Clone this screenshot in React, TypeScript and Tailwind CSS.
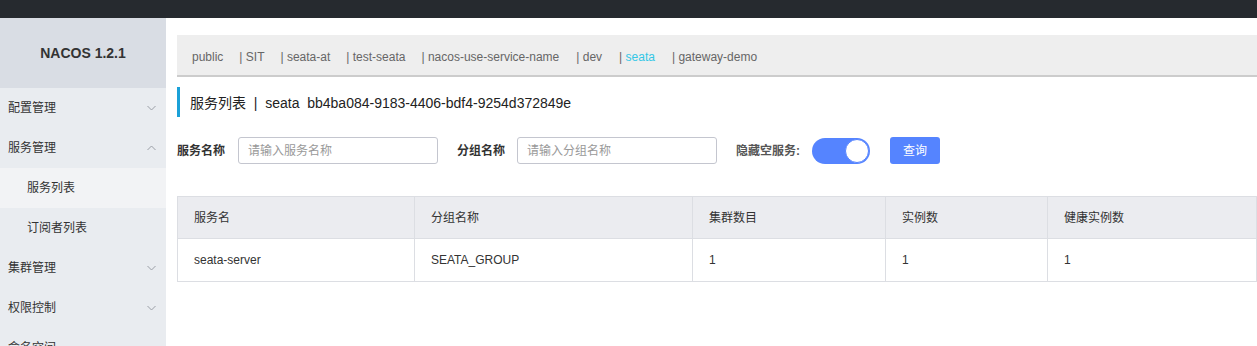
import React from "react";

const FONT = { fontFamily: '"Liberation Sans", "Noto Sans CJK SC", sans-serif' };

const namespaces = ["public", "SIT", "seata-at", "test-seata", "nacos-use-service-name", "dev", "seata", "gateway-demo"];

function Chevron({ up }: { up?: boolean }) {
  return (
    <svg width="9" height="6" viewBox="0 0 9 6" className="text-[#9a9ea6]">
      <polyline
        points={up ? "0.5,5 4.5,1 8.5,5" : "0.5,1 4.5,5 8.5,1"}
        fill="none"
        stroke="currentColor"
        strokeWidth="1"
      />
    </svg>
  );
}

function MenuItem({ label, open, sub, active }: { label: string; open?: boolean; sub?: boolean; active?: boolean }) {
  return (
    <div
      className={`flex h-10 items-center justify-between pr-[10px] text-[12px] text-[#333] ${sub ? "pl-[27px]" : "pl-[8px]"} ${
        active ? "bg-[#f2f3f5]" : ""
      }`}
    >
      <span>{label}</span>
      {sub ? null : <Chevron up={open} />}
    </div>
  );
}

const cols = [
  { title: "服务名", value: "seata-server", w: "w-[237px]" },
  { title: "分组名称", value: "SEATA_GROUP", w: "w-[278px]" },
  { title: "集群数目", value: "1", w: "w-[193px]" },
  { title: "实例数", value: "1", w: "w-[162px]" },
  { title: "健康实例数", value: "1", w: "flex-1" },
];

export default function App() {
  return (
    <div className="flex h-[346px] flex-col overflow-hidden bg-white" style={FONT}>
      <div className="h-[18px] shrink-0 bg-[#262a2f]" />
      <div className="flex min-h-0 flex-1">
        <aside className="w-[166px] shrink-0 bg-[#e9ecf0]">
          <div className="flex h-[70px] items-center justify-center bg-[#d9dde4] text-[14px] font-bold text-[#333]">
            NACOS 1.2.1
          </div>
          <MenuItem label="配置管理" />
          <MenuItem label="服务管理" open />
          <MenuItem label="服务列表" sub active />
          <MenuItem label="订阅者列表" sub />
          <MenuItem label="集群管理" />
          <MenuItem label="权限控制" />
          <MenuItem label="命名空间" />
        </aside>

        <main className="min-w-0 flex-1 pl-[11px] pt-[17px]">
          <div className="flex h-[42px] items-center border-b-2 border-[#cccccc] bg-[#eeeeee] pl-[15px] pt-[3px] text-[12px] text-[#666]">
            {namespaces.map((ns, i) => (
              <span key={ns} className={`whitespace-pre ${i >= 4 ? "mr-[17px]" : "mr-[16px]"}`}>
                {i > 0 ? "| " : ""}
                <span className={ns === "seata" ? "text-[#33c7e6]" : ""}>{ns}</span>
              </span>
            ))}
          </div>

          <div className="mt-[10px] flex h-[30px] items-center border-l-[3px] border-[#1ba1d8] pl-[10px] pt-[3px] text-[14px] text-[#222]">
            服务列表 &nbsp;|&nbsp; seata &nbsp;bb4ba084-9183-4406-bdf4-9254d372849e
          </div>

          <div className="mt-[20px] flex items-center text-[12px]">
            <span className="mr-[13px] font-bold text-[#333]">服务名称</span>
            <input
              placeholder="请输入服务名称"
              className="h-[27px] w-[200px] rounded-[3px] border border-[#c4c6cf] px-[9px] text-[12px] outline-none placeholder:text-[#999]"
            />
            <span className="ml-[19px] mr-[12px] font-bold text-[#333]">分组名称</span>
            <input
              placeholder="请输入分组名称"
              className="h-[27px] w-[200px] rounded-[3px] border border-[#c4c6cf] px-[9px] text-[12px] outline-none placeholder:text-[#999]"
            />
            <span className="ml-[19px] mr-[12px] font-bold text-[#555]">隐藏空服务:</span>
            <div className="flex h-[26px] w-[58px] items-center justify-end rounded-full bg-[#5584ff] pr-[1px]">
              <div className="h-[24px] w-[24px] rounded-full border border-[#5584ff] bg-white" />
            </div>
            <button className="ml-[20px] h-[27px] w-[50px] rounded-[3px] bg-[#5584ff] text-[12px] text-white">
              查询
            </button>
          </div>

          <div className="mt-[32px] border-l border-t border-[#dcdee3] text-[12px] text-[#333]">
            <div className="flex h-[42px] bg-[#ebecf0]">
              {cols.map((c) => (
                <div
                  key={c.title}
                  className={`${c.w} flex items-center border-b border-r border-[#dcdee3] pl-[16px]`}
                >
                  {c.title}
                </div>
              ))}
            </div>
            <div className="flex h-[43px]">
              {cols.map((c) => (
                <div
                  key={c.title}
                  className={`${c.w} flex items-center border-b border-r border-[#dcdee3] pl-[16px]`}
                >
                  {c.value}
                </div>
              ))}
            </div>
          </div>
        </main>
      </div>
    </div>
  );
}
